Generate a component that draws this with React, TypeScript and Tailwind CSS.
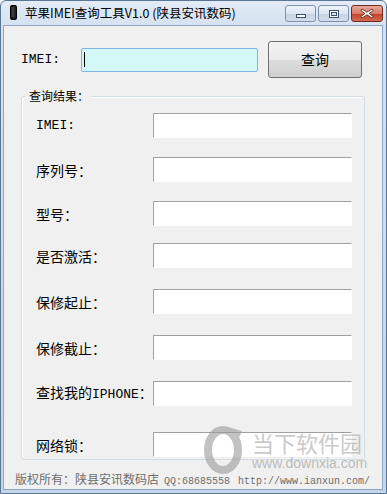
import React from "react";

const cjk = '"Noto Sans CJK SC", "Noto Sans", sans-serif';
const mono = '"Liberation Mono", "Noto Sans CJK SC", monospace';

function Label({ parts }: { parts: { t: string; m?: boolean }[] }) {
  return (
    <div className="w-[117px] flex items-baseline text-[14px] text-black leading-[18px] whitespace-nowrap">
      {parts.map((p, i) =>
        p.m ? (
          <span key={i} className="text-[13px]" style={{ fontFamily: mono }}>
            {p.t}
          </span>
        ) : (
          <span key={i} style={{ fontFamily: cjk }}>
            {p.t}
          </span>
        )
      )}
    </div>
  );
}

function Field() {
  return (
    <div className="w-[199px] h-[25px] bg-white border-t border-l border-[#a0a0a0] border-r border-b border-r-white border-b-white" />
  );
}

export default function App() {
  const rows: { parts: { t: string; m?: boolean }[]; mt: string }[] = [
    { parts: [{ t: "IMEI", m: true }, { t: ":", m: true }], mt: "mt-[16px]" },
    { parts: [{ t: "序列号：" }], mt: "mt-[19px]" },
    { parts: [{ t: "型号：" }], mt: "mt-[19px]" },
    { parts: [{ t: "是否激活：" }], mt: "mt-[17px]" },
    { parts: [{ t: "保修起止：" }], mt: "mt-[21px]" },
    { parts: [{ t: "保修截止：" }], mt: "mt-[21px]" },
    { parts: [{ t: "查找我的" }, { t: "IPHONE", m: true }, { t: "：" }], mt: "mt-[21px]" },
    { parts: [{ t: "网络锁：" }], mt: "mt-[26px]" },
  ];

  return (
    <div className="w-[387px] h-[494px] flex flex-col rounded-t-[6px] border border-[#5b7695] bg-[linear-gradient(180deg,#e2ebf6_0%,#d3e0f0_30px,#c4d6ec_100%)] overflow-hidden">
      {/* Title bar */}
      <div className="h-[26px] flex items-start relative">
        <div className="mt-[4px] ml-[9px] w-[7px] h-[15px]">
          <svg width="7" height="15" viewBox="0 0 7 15">
            <rect x="0.5" y="0.5" width="6" height="14" rx="1.2" fill="#1a1a1a" stroke="#000" />
            <rect x="1.5" y="2" width="3" height="10" fill="#3a3a3a" />
          </svg>
        </div>
        <div
          className="ml-[8px] mt-[4px] text-[12.5px] leading-[16px] text-black whitespace-nowrap"
          style={{ fontFamily: cjk }}
        >
          苹果IMEI查询工具V1.0 (陕县安讯数码)
        </div>
        <div className="ml-auto mr-[3px] mt-[4px] flex gap-[2px]">
          <div className="w-[31px] h-[17px] rounded-[3px] border border-[#7d92ad] bg-[linear-gradient(180deg,#eef3f9_0%,#dbe5f1_50%,#c5d4e6_51%,#d2deec_100%)] flex items-center justify-center">
            <div className="w-[10px] h-[4px] bg-white border border-[#3d4f66] mt-[5px]" />
          </div>
          <div className="w-[31px] h-[17px] rounded-[3px] border border-[#7d92ad] bg-[linear-gradient(180deg,#eef3f9_0%,#dbe5f1_50%,#c5d4e6_51%,#d2deec_100%)] flex items-center justify-center">
            <div className="w-[10px] h-[8px] border border-[#3d4f66] bg-white flex items-center justify-center">
              <div className="w-[6px] h-[4px] border border-[#3d4f66] bg-[#dbe5f1]" />
            </div>
          </div>
          <div className="w-[32px] h-[17px] rounded-[3px] border border-[#6d2a22] bg-[linear-gradient(180deg,#eaa899_0%,#dc7a66_50%,#c6412b_51%,#d46a52_100%)] flex items-center justify-center">
            <svg width="14" height="11" viewBox="0 0 14 11">
              <path
                d="M2 1 L7 4.2 L12 1 L13.2 2.5 L9 5.5 L13.2 8.5 L12 10 L7 6.8 L2 10 L0.8 8.5 L5 5.5 L0.8 2.5 Z"
                fill="#fff"
                stroke="#4a1e16"
                strokeWidth="0.8"
              />
            </svg>
          </div>
        </div>
      </div>

      {/* Client area */}
      <div className="flex-1 ml-[2px] mr-[3px] mb-[3px] bg-[#f0f0f0] border border-[#8fa7c2] flex flex-col relative">
        {/* Top row */}
        <div className="flex items-center mt-[15px] ml-[17px]">
          <div className="w-[60px] text-[13px] leading-none text-black" style={{ fontFamily: mono }}>
            IMEI:
          </div>
          <div className="w-[177px] h-[24px] rounded-[2px] border border-[#7eb4e6] bg-[#d4f8f8] flex items-center">
            <div className="ml-[2px] w-[1px] h-[15px] bg-black" />
          </div>
          <div
            className="ml-[10px] w-[94px] h-[37px] rounded-[3px] border border-[#707070] bg-[linear-gradient(180deg,#f3f3f3_0%,#ebebeb_50%,#dddddd_51%,#cfcfcf_100%)] flex items-center justify-center text-[14px] text-black"
            style={{ fontFamily: cjk }}
          >
            查询
          </div>
        </div>

        {/* Group box */}
        <div className="relative mt-[18px] ml-[17px] w-[344px] h-[364px] rounded-[3px] border border-[#d3dde4] shadow-[inset_1px_1px_0_#ffffff] flex flex-col">
          <div
            className="absolute -top-[9px] left-[4px] px-[3px] bg-[#f0f0f0] text-[12px] leading-[16px] text-black"
            style={{ fontFamily: cjk }}
          >
            查询结果：
          </div>
          {rows.map((r, i) => (
            <div key={i} className={`flex items-center ml-[14px] ${r.mt}`}>
              <Label parts={r.parts} />
              <Field />
            </div>
          ))}
        </div>

        {/* Footer */}
        <div className="flex items-baseline mt-[10px] ml-[11px] text-[#6e6e6e] whitespace-nowrap">
          <span className="text-[12px]" style={{ fontFamily: cjk }}>
            版权所有：陕县安讯数码店
          </span>
          <span className="ml-[5px] text-[10px]" style={{ fontFamily: mono }}>
            QQ:68685558
          </span>
          <span className="ml-[8px] text-[10px]" style={{ fontFamily: mono }}>
            http://www.ianxun.com/
          </span>
        </div>

        {/* Watermark */}
        <div className="absolute left-[196px] top-[398px] flex items-center opacity-60 pointer-events-none whitespace-nowrap">
          <svg width="48" height="50" viewBox="0 0 48 50">
            <ellipse cx="23" cy="26" rx="15" ry="20" fill="none" stroke="#9a9a9a" strokeWidth="8" />
            <path d="M28 3 L42 7 L38 16 Z" fill="#9a9a9a" />
          </svg>
          <div className="ml-[4px] flex flex-col">
            <div className="text-[22px] leading-[28px] text-[#a8a8a8]" style={{ fontFamily: cjk }}>
              当下软件园
            </div>
            <div
              className="text-[14px] leading-[14px] text-[#9a9a9a]"
              style={{ fontFamily: '"Liberation Sans", Arial, sans-serif' }}
            >
              www.downxia.com
            </div>
          </div>
        </div>
      </div>
    </div>
  );
}
